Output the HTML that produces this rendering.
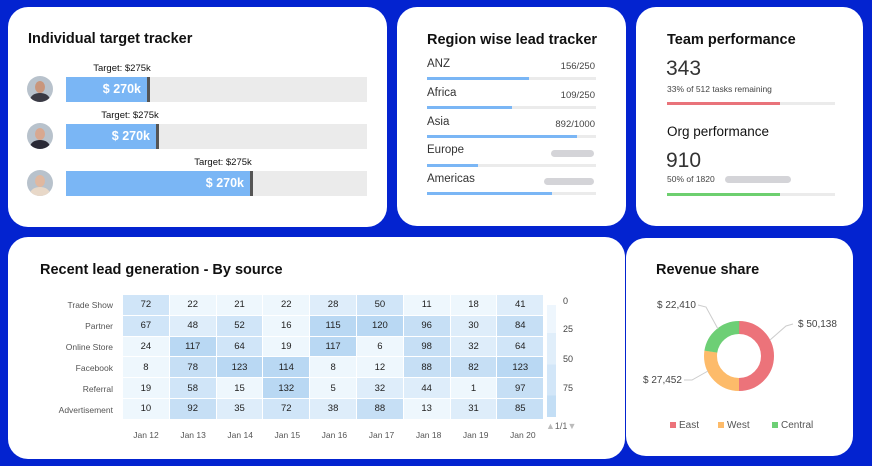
<!DOCTYPE html>
<html><head><meta charset="utf-8"><style>
*{margin:0;padding:0;box-sizing:border-box}
body{width:872px;height:466px;background:#0323d0;font-family:"Liberation Sans",sans-serif;position:relative;overflow:hidden;color:#222}
.card{position:absolute;background:#fff;border-radius:20px}
.t{position:absolute;font-weight:bold;font-size:14.5px;color:#111;white-space:nowrap}
.a{position:absolute;white-space:nowrap}
.av{position:absolute;width:26px;height:26px;border-radius:50%;background:#b8c2cc;overflow:hidden}
.av i{position:absolute;left:8px;top:5px;width:10px;height:12px;border-radius:50%;background:#c9967c}
.av b{position:absolute;left:3px;top:17px;width:20px;height:14px;border-radius:50%;background:#3a3a44}
.bar{position:absolute;left:66px;width:301px;height:25px;background:#ebebeb}
.bar .f{position:absolute;left:0;top:0;height:25px;background:#7ab6f5;border-right:3px solid #555;color:#fff;font-weight:bold;font-size:12.5px;text-align:right;padding-right:6px;line-height:25px}
.tg{position:absolute;font-size:9.5px;color:#111;transform:translateX(-50%)}
.rl{position:absolute;left:427px;font-size:11.5px;color:#333}
.rv{position:absolute;right:calc(872px - 595px);font-size:9.5px;color:#444}
.rb{position:absolute;left:427px;width:169px;height:3px;background:#ebebeb}
.rb div{height:3px;background:#7ab6f5}
.pill{position:absolute;height:7px;border-radius:4px;background:#d4d4d8}
table{position:absolute;left:122px;top:294px;border-collapse:collapse}
td{width:46.8px;height:20.8px;text-align:center;font-size:9.5px;color:#222;border:1px solid #fff;padding:0}
.rlab{position:absolute;right:calc(872px - 113px);font-size:8.5px;color:#555}
.clab{position:absolute;top:430px;font-size:8.5px;color:#555;transform:translateX(-50%)}
</style></head><body>
<div class="card" style="left:8px;top:7px;width:379px;height:220px"></div>
<div class="card" style="left:397px;top:7px;width:229px;height:219px"></div>
<div class="card" style="left:636px;top:7px;width:227px;height:219px"></div>
<div class="card" style="left:8px;top:237px;width:617px;height:222px"></div>
<div class="card" style="left:626px;top:238px;width:227px;height:218px"></div>

<div class="t" style="left:28px;top:31px">Individual target tracker</div>
<div class="av" style="left:27px;top:76px"><i></i><b></b></div>
<div class="av" style="left:27px;top:123px"><i style="background:#d8a890"></i><b style="background:#2a2a36"></b></div>
<div class="av" style="left:27px;top:170px"><i style="background:#e0b8a0"></i><b style="background:#e8d8c8"></b></div>
<div class="tg" style="left:122px;top:63px">Target: $275k</div>
<div class="bar" style="top:77px"><div class="f" style="width:84px">$ 270k</div></div>
<div class="tg" style="left:130px;top:110px">Target: $275k</div>
<div class="bar" style="top:124px"><div class="f" style="width:93px">$ 270k</div></div>
<div class="tg" style="left:223px;top:157px">Target: $275k</div>
<div class="bar" style="top:171px"><div class="f" style="width:187px">$ 270k</div></div>

<div class="t" style="left:427px;top:32px">Region wise lead tracker</div>
<div class="rl" style="top:58px">ANZ</div><div class="rv" style="top:61px">156/250</div><div class="rb" style="top:77px"><div style="width:102px"></div></div>
<div class="rl" style="top:87px">Africa</div><div class="rv" style="top:90px">109/250</div><div class="rb" style="top:106px"><div style="width:85px"></div></div>
<div class="rl" style="top:116px">Asia</div><div class="rv" style="top:119px">892/1000</div><div class="rb" style="top:135px"><div style="width:150px"></div></div>
<div class="rl" style="top:144px">Europe</div><div class="pill" style="left:551px;top:150px;width:43px"></div><div class="rb" style="top:164px"><div style="width:51px"></div></div>
<div class="rl" style="top:173px">Americas</div><div class="pill" style="left:544px;top:178px;width:50px"></div><div class="rb" style="top:192px"><div style="width:125px"></div></div>

<div class="t" style="left:667px;top:32px">Team performance</div>
<div class="a" style="left:666px;top:57px;font-size:21px;color:#333">343</div>
<div class="a" style="left:667px;top:84px;font-size:8.5px;color:#444">33% of 512 tasks remaining</div>
<div class="a" style="left:667px;top:102px;width:168px;height:3px;background:#ebebeb"><div style="width:113px;height:3px;background:#e9737a"></div></div>
<div class="a" style="left:667px;top:124px;font-size:13.5px;color:#111">Org performance</div>
<div class="a" style="left:666px;top:149px;font-size:21px;color:#333">910</div>
<div class="a" style="left:667px;top:174px;font-size:8.5px;color:#444">50% of 1820</div>
<div class="pill" style="left:725px;top:176px;width:66px"></div>
<div class="a" style="left:667px;top:193px;width:168px;height:3px;background:#ebebeb"><div style="width:113px;height:3px;background:#6dcf6f"></div></div>

<div class="t" style="left:40px;top:262px">Recent lead generation - By source</div>
<div class="rlab" style="top:300px">Trade Show</div>
<div class="rlab" style="top:321px">Partner</div>
<div class="rlab" style="top:342px">Online Store</div>
<div class="rlab" style="top:363px">Facebook</div>
<div class="rlab" style="top:384px">Referral</div>
<div class="rlab" style="top:405px">Advertisement</div>
<table id="hm"></table>
<div class="a" style="left:547px;top:305px;width:9px;height:112px;background:linear-gradient(#eef6fd 0,#eef6fd 25%,#e0eefa 25%,#e0eefa 53%,#d2e6f8 53%,#d2e6f8 81%,#c3def5 81%)"></div>
<div class="a" style="left:563px;top:296px;font-size:9px;color:#444">0</div>
<div class="a" style="left:563px;top:324px;font-size:9px;color:#444">25</div>
<div class="a" style="left:563px;top:354px;font-size:9px;color:#444">50</div>
<div class="a" style="left:563px;top:383px;font-size:9px;color:#444">75</div>
<div class="a" style="left:546px;top:421px;font-size:9px;color:#666"><span style="color:#bbb">▲</span>1/1<span style="color:#bbb">▼</span></div>

<div class="t" style="left:656px;top:262px">Revenue share</div>
<svg class="a" style="left:626px;top:238px" width="227" height="218">
<circle cx="113" cy="118" r="28.5" fill="none" stroke="#ec737a" stroke-width="13" stroke-dasharray="89.5 200" transform="rotate(-90 113 118)"/>
<circle cx="113" cy="118" r="28.5" fill="none" stroke="#fdbb6a" stroke-width="13" stroke-dasharray="49.2 200" transform="rotate(90 113 118)"/>
<circle cx="113" cy="118" r="28.5" fill="none" stroke="#6dcf75" stroke-width="13" stroke-dasharray="40.5 200" transform="rotate(188.8 113 118)"/>
<polyline points="144,102 160,88 167,86" fill="none" stroke="#ccc"/>
<polyline points="92,91 80,69 72,67" fill="none" stroke="#ccc"/>
<polyline points="82,133 66,142 58,142" fill="none" stroke="#ccc"/>
<text x="172" y="89" font-size="10" fill="#444" font-family="Liberation Sans">$ 50,138</text>
<text x="31" y="70" font-size="10" fill="#444" font-family="Liberation Sans">$ 22,410</text>
<text x="17" y="145" font-size="10" fill="#444" font-family="Liberation Sans">$ 27,452</text>
<rect x="44" y="184" width="6" height="6" fill="#ec737a"/><text x="53" y="190" font-size="10" fill="#555" font-family="Liberation Sans">East</text>
<rect x="92" y="184" width="6" height="6" fill="#fdbb6a"/><text x="101" y="190" font-size="10" fill="#555" font-family="Liberation Sans">West</text>
<rect x="146" y="184" width="6" height="6" fill="#6dcf75"/><text x="155" y="190" font-size="10" fill="#555" font-family="Liberation Sans">Central</text>
</svg>
<div id="cl"></div>
<script>
var d=[[72,22,21,22,28,50,11,18,41],[67,48,52,16,115,120,96,30,84],[24,117,64,19,117,6,98,32,64],[8,78,123,114,8,12,88,82,123],[19,58,15,132,5,32,44,1,97],[10,92,35,72,38,88,13,31,85]];
function c(v){return v<25?'#eef7fd':v<50?'#deedfa':v<75?'#d0e5f8':v<110?'#c6dff5':'#b9d8f3'}
var h='';d.forEach(function(r){h+='<tr>'+r.map(function(v){return '<td style="background:'+c(v)+'">'+v+'</td>'}).join('')+'</tr>'});
document.getElementById('hm').innerHTML=h;
var s='';for(var i=0;i<9;i++)s+='<div class="clab" style="left:'+(146+i*47.1)+'px">Jan '+(12+i)+'</div>';
document.getElementById('cl').innerHTML=s;
</script>
</body></html>
